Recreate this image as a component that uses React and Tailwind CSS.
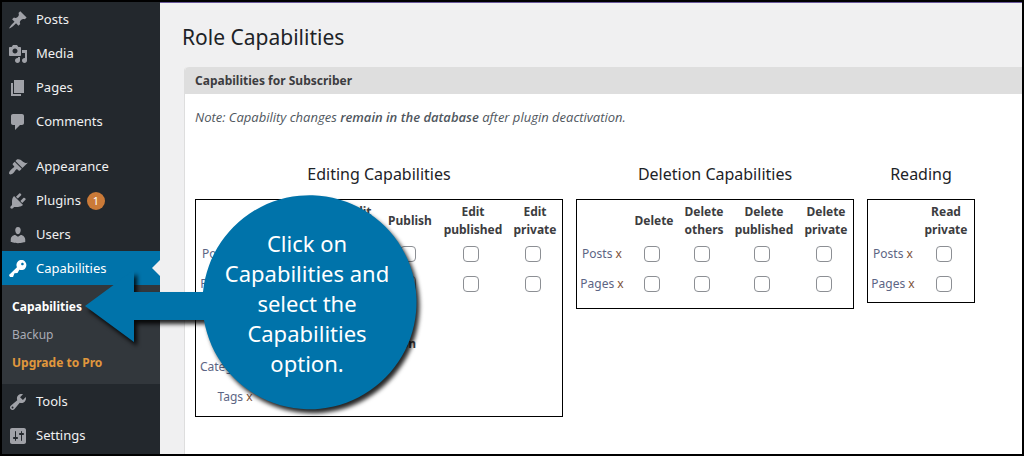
import clsx from 'clsx';

const ICONS = {
  posts:
    'M10.44 3.02l1.82-1.82 6.36 6.35-1.83 1.82c-1.05-.68-2.48-.57-3.41.36l-.75.75c-.92.93-1.04 2.35-.35 3.41l-1.83 1.82-2.41-2.41-2.8 2.79c-.42.42-3.38 2.71-3.8 2.29s1.86-3.39 2.28-3.81l2.79-2.79L4.1 9.36l1.83-1.82c1.05.69 2.48.57 3.4-.36l.75-.75c.93-.92 1.05-2.35.36-3.41z',
  media:
    'M13 11V4c0-.55-.45-1-1-1h-1.67L9 1H5L3.67 3H2c-.55 0-1 .45-1 1v7c0 .55.45 1 1 1h10c.55 0 1-.45 1-1zM7 4.5c1.38 0 2.5 1.12 2.5 2.5S8.38 9.5 7 9.5 4.5 8.38 4.5 7 5.62 4.5 7 4.5zM14 6h5v10.5c0 1.38-1.12 2.5-2.5 2.5S14 17.88 14 16.5s1.12-2.5 2.5-2.5c.17 0 .34.02.5.05V9h-3V6zm-4 8.05V13h2v3.5c0 1.38-1.12 2.5-2.5 2.5S7 17.88 7 16.5 8.12 14 9.5 14c.17 0 .34.02.5.05z',
  pages: 'M6 15V2h10v13H6zm-1 1h8v2H3V5h2v11z',
  comments: 'M5 2h9c1.1 0 2 .9 2 2v7c0 1.1-.9 2-2 2h-2l-5 5v-5H5c-1.1 0-2-.9-2-2V4c0-1.1.9-2 2-2z',
  appearance:
    'M14.48 11.06L7.41 3.99l1.5-1.5c.5-.56 2.3-.47 3.51.32 1.21.8 1.43 1.28 2.91 2.1 1.18.64 2.45 1.26 4.45.85zm-.71.71L6.7 4.7 4.93 6.47c-.39.39-.39 1.02 0 1.41l1.06 1.06c.39.39.39 1.03 0 1.42-.6.6-1.43 1.11-2.21 1.69-.35.26-.7.53-1.01.84C1.43 14.23.4 16.08 1.4 17.07c.99 1 2.84-.03 4.18-1.36.31-.31.58-.66.85-1.02.57-.78 1.08-1.61 1.69-2.21.39-.39 1.02-.39 1.41 0l1.06 1.06c.39.39 1.02.39 1.41 0z',
  plugins:
    'M13.11 4.36L9.87 7.6 8 5.73l3.24-3.24c.35-.34 1.05-.2 1.56.32.52.51.66 1.21.31 1.55zm-8 1.77l.91-1.12 9.01 9.01-1.19.84c-.71.71-2.63 1.16-3.82 1.16H6.14L4.9 17.26c-.59.59-1.54.59-2.12 0-.59-.58-.59-1.53 0-2.12l1.24-1.24v-3.88c0-1.13.4-3.19 1.09-3.89zm7.26 3.97l3.24-3.24c.34-.35 1.04-.21 1.55.31.52.51.66 1.21.31 1.55l-3.24 3.25z',
  users:
    'M10 9.25c-2.27 0-2.73-3.44-2.73-3.44C7 4.02 7.82 2 9.97 2c2.16 0 2.98 2.02 2.71 3.81 0 0-.41 3.44-2.68 3.44zm0 2.57L12.72 10c2.39 0 4.52 2.33 4.52 4.53v2.49s-3.65 1.13-7.24 1.13c-3.65 0-7.24-1.13-7.24-1.13v-2.49c0-2.25 1.94-4.48 4.47-4.48z',
  key: 'M16.95 2.58c1.96 1.95 1.96 5.12 0 7.07-1.51 1.51-3.75 1.84-5.59 1.01l-1.87 3.31-2.99.31L5 18H2l-1-2 7.95-7.69c-.92-1.87-.62-4.18.93-5.73 1.95-1.96 5.12-1.96 7.07 0zm-2.51 3.79c.74 0 1.33-.6 1.33-1.34 0-.73-.59-1.33-1.33-1.33-.73 0-1.33.6-1.33 1.33 0 .74.6 1.34 1.33 1.34z',
  tools:
    'M16.68 9.77c-1.34 1.34-3.3 1.67-4.95.99l-5.41 6.52c-.99.99-2.59.99-3.58 0s-.99-2.59 0-3.57l6.52-5.42c-.68-1.65-.35-3.61.99-4.95 1.28-1.28 3.12-1.62 4.72-1.06l-2.89 2.89 2.82 2.82 2.86-2.87c.53 1.58.18 3.39-1.08 4.65zM3.81 16.21c.4.39 1.04.39 1.43 0 .4-.4.4-1.04 0-1.43-.39-.4-1.03-.4-1.43 0-.39.39-.39 1.03 0 1.43z',
  settings:
    'M18 16V4c0-1.1-.9-2-2-2H4c-1.1 0-2 .9-2 2v12c0 1.1.9 2 2 2h12c1.1 0 2-.9 2-2zM8 11h1c.55 0 1 .45 1 1s-.45 1-1 1H8v1.5c0 .28-.22.5-.5.5s-.5-.22-.5-.5V13H6c-.55 0-1-.45-1-1s.45-1 1-1h1V5.5c0-.28.22-.5.5-.5s.5.22.5.5V11zm5-2h-1c-.55 0-1-.45-1-1s.45-1 1-1h1V5.5c0-.28.22-.5.5-.5s.5.22.5.5V7h1c.55 0 1 .45 1 1s-.45 1-1 1h-1v5.5c0 .28-.22.5-.5.5s-.5-.22-.5-.5V9z',
};

const CONTENT_MENU = [
  { icon: 'posts', label: 'Posts' },
  { icon: 'media', label: 'Media' },
  { icon: 'pages', label: 'Pages' },
  { icon: 'comments', label: 'Comments' },
];

const ADMIN_MENU = [
  { icon: 'appearance', label: 'Appearance' },
  { icon: 'plugins', label: 'Plugins', count: 1 },
  { icon: 'users', label: 'Users' },
  { icon: 'key', label: 'Capabilities', current: true },
];

const SETTINGS_MENU = [
  { icon: 'tools', label: 'Tools' },
  { icon: 'settings', label: 'Settings' },
];

const EDITING = [
  { label: 'Edit', width: 'w-[88px]' },
  { label: 'Edit others', width: 'w-[48px]' },
  { label: 'Publish', width: 'w-[52px]' },
  { label: 'Edit published', width: 'w-[74px]' },
  { label: 'Edit private', width: 'w-[50px]' },
];

const DELETION = [
  { label: 'Delete', width: 'w-[54px]' },
  { label: 'Delete others', width: 'w-[46px]' },
  { label: 'Delete published', width: 'w-[74px]' },
  { label: 'Delete private', width: 'w-[50px]' },
];

const READING = [{ label: 'Read private', width: 'w-[56px]' }];

function MenuItem({ icon, label, count, current }) {
  return (
    <li>
      <a
        href="#"
        className={clsx(
          'relative flex h-[34px] items-center gap-2 pt-0.5 pl-1.5 text-[13px]',
          current ? 'bg-[#0073aa] text-white' : 'text-[#f0f0f1]'
        )}
      >
        <svg
          viewBox="0 0 20 20"
          className={clsx('size-5 shrink-0', current ? 'fill-white' : 'fill-[#a0a2a8]')}
          aria-hidden="true"
        >
          <path d={ICONS[icon]} />
        </svg>
        <span>{label}</span>
        {count && (
          <span className="-ml-0.5 flex size-[18px] items-center justify-center rounded-full bg-[#ca7a38] text-[11px] text-white">
            {count}
          </span>
        )}
        {current && (
          <span className="absolute top-1/2 right-0 -translate-y-1/2 border-8 border-l-0 border-transparent border-r-[#f0f0f1]" />
        )}
      </a>
    </li>
  );
}

function Menu({ items }) {
  return (
    <ul>
      {items.map((item) => (
        <MenuItem key={item.label} {...item} />
      ))}
    </ul>
  );
}

function Sidebar() {
  return (
    <nav className="w-[158px] shrink-0 bg-[#23282d]">
      <Menu items={CONTENT_MENU} />
      <div className="h-[11px]" />
      <Menu items={ADMIN_MENU} />
      <ul className="bg-[#32373c] pt-2 pb-[7px] text-xs leading-7">
        <li>
          <a href="#" className="block pl-2.5 font-bold text-white">Capabilities</a>
        </li>
        <li>
          <a href="#" className="block pl-2.5 text-[#a9abb5]">Backup</a>
        </li>
        <li>
          <a href="#" className="block pl-2.5 font-bold text-[#e0973d]">Upgrade to Pro</a>
        </li>
      </ul>
      <Menu items={SETTINGS_MENU} />
    </nav>
  );
}

function RowLabel({ children }) {
  return (
    <th scope="row" className="font-normal whitespace-nowrap text-[#5c6584]">
      <a href="#">{children}</a>{' '}
      <a href="#" className="text-[#7d5238]" aria-label={`Clear ${children}`}>x</a>
    </th>
  );
}

function CapTable({ columns, labelWidth = 'w-[50px]' }) {
  return (
    <table className="table-fixed">
      <thead>
        <tr className="h-9 leading-[18px] text-[#3c3c40]">
          <td className={labelWidth} />
          {columns.map((col) => (
            <th key={col.label} scope="col" className={col.width}>{col.label}</th>
          ))}
        </tr>
      </thead>
      <tbody>
        {['Posts', 'Pages'].map((type) => (
          <tr key={type} className="h-[30px]">
            <RowLabel>{type}</RowLabel>
            {columns.map((col) => (
              <td key={col.label} className="text-center">
                <input
                  type="checkbox"
                  aria-label={`${col.label} ${type}`}
                  className="mr-1 size-4 appearance-none rounded border border-[#8c8f94] bg-white align-middle checked:bg-[#0073aa]"
                />
              </td>
            ))}
          </tr>
        ))}
      </tbody>
    </table>
  );
}

function CapGroup({ title, className, children }) {
  return (
    <section>
      <h3 className="mb-[11px] text-center text-base leading-7 text-[#1d2327]">{title}</h3>
      <div className={clsx('border border-black pt-[3px] text-xs', className)}>{children}</div>
    </section>
  );
}

function TermTable() {
  return (
    <table className="mt-[37px]">
      <thead>
        <tr className="h-4 leading-4 text-[#3c3c40]">
          <td className="w-[78px]" />
          <th scope="col" className="w-[142px] text-right">Term Administration</th>
        </tr>
      </thead>
      <tbody>
        {['Categories', 'Tags'].map((type) => (
          <tr key={type} className="h-[30px]">
            <RowLabel>{type}</RowLabel>
          </tr>
        ))}
      </tbody>
    </table>
  );
}

// Arrow and bubble share one outline so that the drop shadow runs round both
function Callout() {
  return (
    <div className="pointer-events-none absolute top-[188px] left-[78px] h-[230px] w-[350px]">
      <svg viewBox="80 190 350 230" className="h-full w-full overflow-visible drop-shadow-[3px_4px_2px_rgba(0,0,0,0.85)]">
        <path
          fill="#0073aa"
          d="M85 306 L134 270 V292 H203 A107 107 0 1 1 204 320 H134 V342 Z"
        />
      </svg>
      <p className="absolute top-[38px] left-[127px] w-[200px] text-center text-[22px] leading-[30px] text-white">
        Click on
        <br />
        Capabilities and
        <br />
        select the
        <br />
        Capabilities
        <br />
        option.
      </p>
    </div>
  );
}

export default function App() {
  return (
    <div className="relative flex min-h-screen overflow-hidden border-2 border-black bg-[#f0f0f1] font-['Noto_Sans','Open_Sans',sans-serif]">
      <Sidebar />
      <main className="flex min-w-0 flex-1 flex-col border-t border-[#6a5a9c]">
        <h1 className="mt-[18px] mb-[14px] pl-[22px] text-[21px] leading-8 font-normal text-[#1d2327]">
          Role Capabilities
        </h1>
        <div className="ml-6 flex-1 rounded-tl border-l border-[#dedede] bg-white">
          <h2 className="rounded-tl bg-[#dedede] pl-2.5 text-xs leading-[27px] font-bold text-[#3c3c40]">
            Capabilities for Subscriber
          </h2>
          <div className="px-2.5 pt-3.5">
            <p className="mb-[34px] font-['Open_Sans',sans-serif] text-[13px] leading-[18px] text-[#50575e] italic">
              Note: Capability changes <strong className="font-semibold">remain in the database</strong> after plugin
              deactivation.
            </p>
            <div className="flex items-start gap-[13px]">
              <CapGroup title="Editing Capabilities" className="w-[368px] pb-1">
                <CapTable columns={EDITING} labelWidth="w-[52px]" />
                <TermTable />
              </CapGroup>
              <CapGroup title="Deletion Capabilities" className="w-[278px] pb-[9px]">
                <CapTable columns={DELETION} />
              </CapGroup>
              <CapGroup title="Reading" className="w-[108px] pb-[3px]">
                <CapTable columns={READING} />
              </CapGroup>
            </div>
          </div>
        </div>
      </main>
      <Callout />
    </div>
  );
}
